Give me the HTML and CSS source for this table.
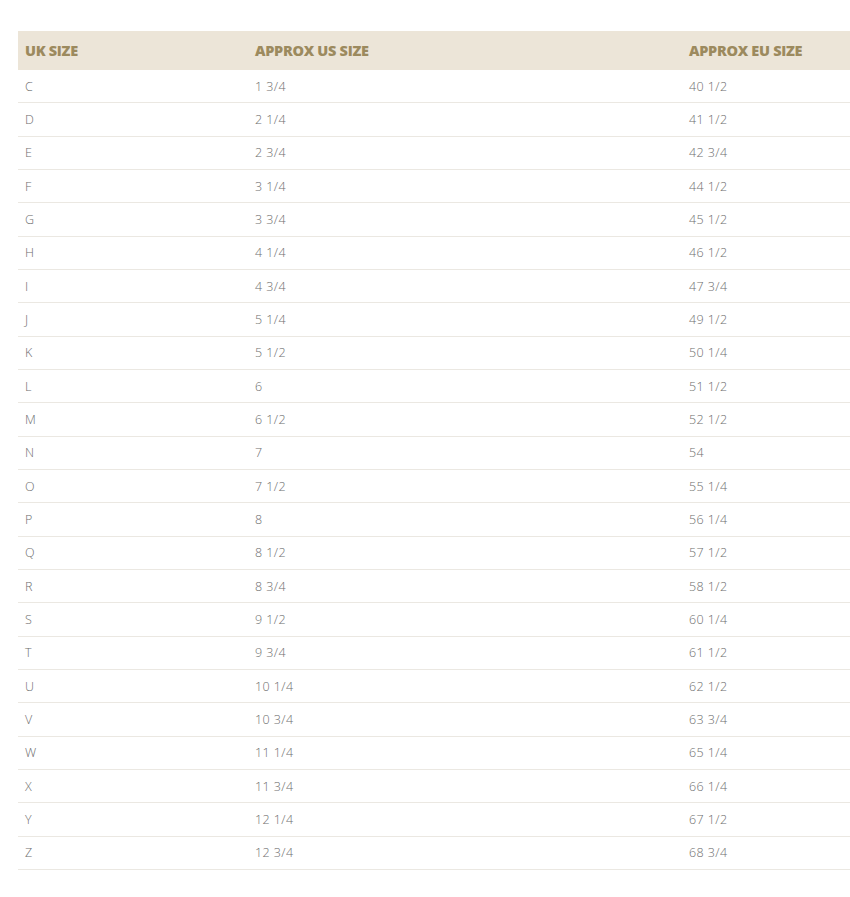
FILE: index.html
```html
<!DOCTYPE html>
<html>
<head>
<meta charset="utf-8">
<link rel="stylesheet" href="styles.css">
</head>
<body>
<div class="chart">
  <div class="row head"><div>UK SIZE</div><div>APPROX US SIZE</div><div>APPROX EU SIZE</div></div>
  <div class="row"><div>C</div><div>1 3/4</div><div>40 1/2</div></div>
  <div class="row"><div>D</div><div>2 1/4</div><div>41 1/2</div></div>
  <div class="row"><div>E</div><div>2 3/4</div><div>42 3/4</div></div>
  <div class="row"><div>F</div><div>3 1/4</div><div>44 1/2</div></div>
  <div class="row"><div>G</div><div>3 3/4</div><div>45 1/2</div></div>
  <div class="row"><div>H</div><div>4 1/4</div><div>46 1/2</div></div>
  <div class="row"><div>I</div><div>4 3/4</div><div>47 3/4</div></div>
  <div class="row"><div>J</div><div>5 1/4</div><div>49 1/2</div></div>
  <div class="row"><div>K</div><div>5 1/2</div><div>50 1/4</div></div>
  <div class="row"><div>L</div><div>6</div><div>51 1/2</div></div>
  <div class="row"><div>M</div><div>6 1/2</div><div>52 1/2</div></div>
  <div class="row"><div>N</div><div>7</div><div>54</div></div>
  <div class="row"><div>O</div><div>7 1/2</div><div>55 1/4</div></div>
  <div class="row"><div>P</div><div>8</div><div>56 1/4</div></div>
  <div class="row"><div>Q</div><div>8 1/2</div><div>57 1/2</div></div>
  <div class="row"><div>R</div><div>8 3/4</div><div>58 1/2</div></div>
  <div class="row"><div>S</div><div>9 1/2</div><div>60 1/4</div></div>
  <div class="row"><div>T</div><div>9 3/4</div><div>61 1/2</div></div>
  <div class="row"><div>U</div><div>10 1/4</div><div>62 1/2</div></div>
  <div class="row"><div>V</div><div>10 3/4</div><div>63 3/4</div></div>
  <div class="row"><div>W</div><div>11 1/4</div><div>65 1/4</div></div>
  <div class="row"><div>X</div><div>11 3/4</div><div>66 1/4</div></div>
  <div class="row"><div>Y</div><div>12 1/4</div><div>67 1/2</div></div>
  <div class="row"><div>Z</div><div>12 3/4</div><div>68 3/4</div></div>
</div>
</body>
</html>
```
FILE: styles.css
```css
html, body {
  margin: 0;
  padding: 0;
  background: #ffffff;
}
body {
  font-family: "Open Sans", "Noto Sans", sans-serif;
}
.chart {
  margin: 31px 0 0 18px;
  width: 832px;
}
.row {
  display: grid;
  grid-template-columns: 230px 434px 1fr;
  height: 33.33px;
  align-items: center;
  border-bottom: 1px solid #ebe8e2;
  box-sizing: border-box;
  font-size: 12.5px;
  font-weight: 300;
  letter-spacing: 0.4px;
  color: #6e6e6e;
}
.row > div {
  padding-left: 7px;
}
.row.head {
  height: 39px;
  background: #ece5d8;
  border-bottom: none;
  font-size: 14.5px;
  font-weight: 800;
  color: #9c8a5e;
  letter-spacing: -0.3px;
}
```
